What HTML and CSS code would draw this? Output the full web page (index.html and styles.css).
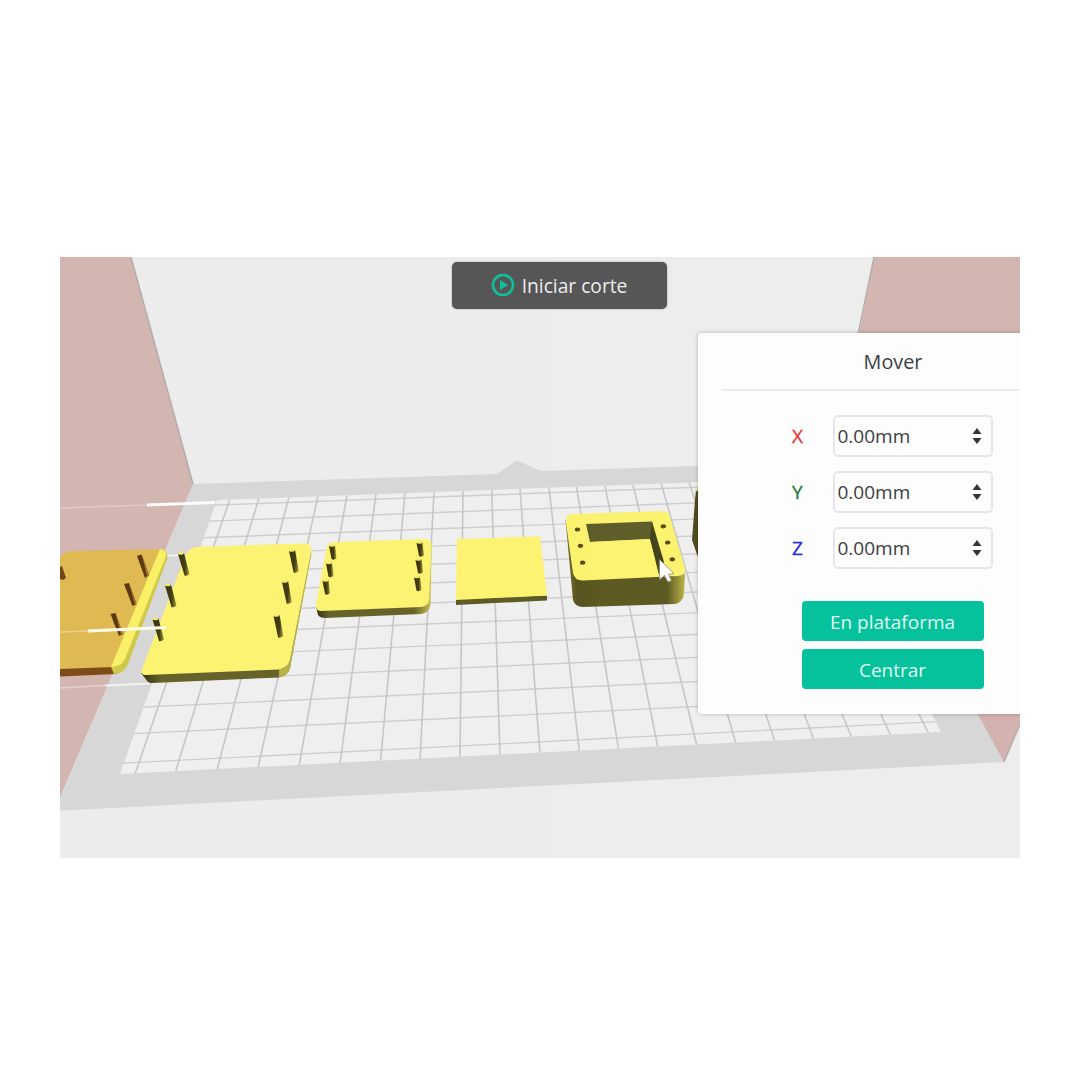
FILE: index.html
```html
<!DOCTYPE html>
<html lang="es">
<head>
<meta charset="utf-8">
<title>Mover</title>
<link rel="stylesheet" href="styles.css">
</head>
<body>
<main class="viewer">
  <svg class="scene" viewBox="60 257 960 601" aria-hidden="true">
    <defs>
      <clipPath id="grid"><path d="M217 500L811 478L941 732L120 774Z"/></clipPath>
      <linearGradient id="edge"><stop offset="0" stop-color="#34320f"/><stop offset=".12" stop-color="#66632a"/><stop offset=".85" stop-color="#66632a"/><stop offset="1" stop-color="#cbc451"/></linearGradient>
      <linearGradient id="boxside"><stop offset="0" stop-color="#777430"/><stop offset=".1" stop-color="#56531f"/><stop offset=".28" stop-color="#5c5922"/><stop offset=".85" stop-color="#5c5922"/><stop offset="1" stop-color="#bbb64a"/></linearGradient>
      <linearGradient id="peg"><stop offset="0" stop-color="#39330c"/><stop offset=".6" stop-color="#433e14"/><stop offset="1" stop-color="#aaa23d"/></linearGradient>
      <g id="tall"><path d="M-.5 0L5.500 -1L11 20Q8.500 22.500 6 21.500Z" fill="url(#peg)"/><ellipse cx="2.300" cy="-.5" rx="3" ry="1.300" fill="#f3ea68"/></g>
      <g id="short"><path d="M-.5 0L5.500 -1L7 12.500Q4 14.500 2 13Z" fill="url(#peg)"/><ellipse cx="2.500" cy="-.5" rx="2.900" ry="1.200" fill="#f3ea68"/></g>
    </defs>

    <rect x="60" y="257" width="960" height="601" fill="#ececec"/>
    <path d="M552 257H1020V858H552Z" fill="#ededed"/>
    <path d="M193 484L497 474L517 460.500L541 471L850 461L1004 762L55 811Z" fill="#d7d7d7"/>
    <path d="M217 500L811 478L941 732L120 774Z" fill="#efefef"/>

    <g clip-path="url(#grid)" fill="none" stroke="#cecece">
      <path stroke-width="1.400" d="M100 764.300L980 719.400M100 735.200L980 692.900M100 709.100L980 668.600M100 684L980 644.800M100 660L980 622.200M100 637.800L980 600.800M100 616.500L980 580.400M100 596.200L980 561M100 577.400L980 542.600M100 559.100L980 524.800M100 541.600L980 508.200M100 525.200L980 492.200M100 509.400L980 476.800"/>
      <path stroke-width="1.600" stroke="#c6c6c6" d="M230 499L135 774M259 498L175.500 772M289 497L217 770M318 496L258 768M347 495L299 766M376 494L340 764M405 493L380.500 762M434 492L420 760M463 491L460 758M491.700 490L500 756M520 489L540 754M549 488L579.500 752M576.500 487L618.700 750M605 486L658 748M633 485L697 746M661 483L736 744M689 482L775 742M717 481L814 740M745 480L852 738M772 479L891 736M799 478L929 734"/>
    </g>

    <g class="walls">
      <path d="M60 257H131L193 484L60 798Z" fill="#d3b5b1"/>
      <path d="M874 257H1020V340H858Z" fill="#d3b5b1"/>
      <path d="M970 700H1020V724L1004 762Z" fill="#d3b2af"/>
      <path d="M131 257L193 484M874 257L857 340M1020 724L1004 762" stroke="#b5adaa" stroke-width="1.500" fill="none"/>
    </g>

    <path d="M60 508L147 505" stroke="#dfcac7" stroke-width="1.500"/>
    <path d="M147 505L215 502.500" stroke="#fcfcfc" stroke-width="3"/>
    <path d="M60 688L105 685.500" stroke="#e6d1ce" stroke-width="1.500"/>
    <path d="M105 685.500L150 683.500M166 556L180 555" stroke="#f2f2f2" stroke-width="2"/>

    <g class="board-outside">
      <path d="M60 668L113 664L117 674L60 676.500Z" fill="#7d4c18"/>
      <path d="M60 557Q65 551 73 551L164 549L113 667L60 669Z" fill="#dfba52"/>
      <path d="M160 549Q168 549.500 167.500 558L128 664Q124 674 114 674L111 667Z" fill="#d0c84a"/>
      <path d="M160 549Q167 549.500 166 556L125 659Q121 667 111 667Z" fill="#f9f067"/>
      <path d="M60 567L62 566L66 578L63 580L60 579Z" fill="#704617"/>
      <path d="M137 556L141.500 554.500L149 575L145 578Z M124 584L129 583L136.500 604L132.500 606Z M110.500 614L115.500 613L123 634L119 636Z" fill="#5c3811"/>
      <path d="M142 555L149 575L147 576.500Z M129 583L136.500 604L135 605Z M115.500 613L123 634L121 635Z" fill="#a97728"/>
    </g>

    <g class="board-large">
      <path d="M141 673L148 682Q149 683 152 683L279 677.500Q288 676 290 668L311 553L280 660Z" fill="url(#edge)"/>
      <path d="M196 547L303 543.500Q313 543 311 552L290 660Q288 668 279 669.500L146 675Q140 675 142 669L183 562Q187 548 196 547Z" fill="#fcf373"/>
      <path d="M311 552L290 660Q288 668 279 669.500V677.500Q288 676 290 668L311.500 554Z" fill="#b8b248"/>
      <use href="#tall" x="178.500" y="554"/>
      <use href="#tall" x="165.500" y="585.500"/>
      <use href="#tall" x="153" y="619.500"/>
      <use href="#tall" transform="translate(289.500 551) skewX(-5)"/>
      <use href="#tall" transform="translate(282.500 582) skewX(-5)"/>
      <use href="#tall" transform="translate(274 616) skewX(-5)"/>
    </g>
    <path d="M60 632L88 631" stroke="#edcf89" stroke-width="1.500"/>
    <path d="M88 631L166 627.500" stroke="#fffde9" stroke-width="3"/>

    <g class="board-small">
      <path d="M316 606L318 615Q320 618 325 618L421 614Q429 613 430.500 605L431.500 545Z" fill="url(#edge)"/>
      <path d="M334 542L425 539Q432 539 431.500 546L429 600Q428 606 421 607L321 611Q315 611 316 604L326 550Q328 542 334 542Z" fill="#fcf373"/>
      <use href="#short" x="329.500" y="546"/><use href="#short" x="326.500" y="563.500"/><use href="#short" x="323" y="581"/>
      <use href="#short" x="417" y="543"/><use href="#short" x="416" y="560"/><use href="#short" x="414.500" y="577.500"/>
    </g>

    <g class="plate">
      <path d="M456 599L547 595.500V600.500L456 605Z" fill="#5f5b26"/>
      <path d="M457 539L540 536.500L547 595.500L456 600Z" fill="#fcf373"/>
    </g>

    <g class="box">
      <path d="M565.500 520L573 600Q575 607 583 607L675 604Q683 602 684 594L685 574L650 560Z" fill="url(#boxside)"/>
      <path d="M573 514L663 511Q668 511 670 517L685 568Q686 575 678 576L583 580.500Q575 581 573 573L566 523Q565 514 573 514Z" fill="#fbf270"/>
      <path d="M586 524L652 521.500L665 576L658 573L650 539L590 542Z" fill="#5f5d29"/>
      <path d="M590 542L650 539L659 576L590 578Z" fill="#fcf373"/>
      <path d="M652 521.500L672 572L661 576L665 560Z" fill="#fbf270"/>
      <path d="M650 539L652 521.500L664 562L659 571Z" fill="#45431a"/>
      <g fill="#5b4b16"><ellipse cx="577.500" cy="529.500" rx="2.700" ry="2.100"/><ellipse cx="580.500" cy="545.800" rx="2.700" ry="2.100"/><ellipse cx="582.700" cy="562.700" rx="2.700" ry="2.100"/><ellipse cx="663.300" cy="526.300" rx="2.700" ry="2.100"/><ellipse cx="667.700" cy="542.500" rx="2.700" ry="2.100"/><ellipse cx="672.300" cy="559.300" rx="2.700" ry="2.100"/></g>
    </g>
    <path d="M699 488L696 490L695 500L692 540L699 560Z" fill="#4f4d1d"/>
    <path d="M699 487L695.500 490L697 492Z" fill="#f1ea6a"/>
    <path d="M659.500 559.500V579.500L664.500 575.500L668 582L671.500 580.500L668.500 574.500L674 573.500Z" fill="#fff" stroke="#8a8878" stroke-width=".8" stroke-linejoin="round"/>
  </svg>

  <button class="slice">
    <svg class="play" viewBox="0 0 24 24"><circle cx="12" cy="12" r="10"/><path d="M9 7V17L17 12Z"/></svg>
    <span>Iniciar corte</span>
  </button>

  <section class="panel">
    <h1 class="title">Mover</h1>
    <div class="axes">
      <div class="axis"><span class="name red">X</span><div class="field"><span>0.00mm</span><svg class="spin" viewBox="0 0 10 18"><path d="M5 1L9.500 7H.5ZM5 17L.5 11H9.500Z"/></svg></div></div>
      <div class="axis"><span class="name green">Y</span><div class="field"><span>0.00mm</span><svg class="spin" viewBox="0 0 10 18"><path d="M5 1L9.500 7H.5ZM5 17L.5 11H9.500Z"/></svg></div></div>
      <div class="axis"><span class="name blue">Z</span><div class="field"><span>0.00mm</span><svg class="spin" viewBox="0 0 10 18"><path d="M5 1L9.500 7H.5ZM5 17L.5 11H9.500Z"/></svg></div></div>
    </div>
    <div class="actions">
      <button class="action">En plataforma</button>
      <button class="action">Centrar</button>
    </div>
  </section>
</main>
</body>
</html>
```
FILE: styles.css
```css
* { box-sizing: border-box; }
body {
  margin: 0;
  height: 1080px;
  padding: 257px 60px 0;
  background: #fff;
  font-family: "Open Sans", "Noto Sans", sans-serif;
  overflow: hidden;
}
.viewer {
  position: relative;
  width: 960px;
  height: 601px;
  overflow: hidden;
}
.scene { display: block; width: 960px; height: 601px; }
button { font-family: inherit; border: 0; margin: 0; }
.slice {
  position: absolute;
  left: 391.5px;
  top: 4.5px;
  width: 215.5px;
  height: 47px;
  display: flex;
  align-items: center;
  justify-content: center;
  gap: 6.5px;
  padding: 0;
  border-radius: 5px;
  background: #565656;
  box-shadow: 0 0 2px #999;
  color: #ededed;
  font-size: 19.2px;
  white-space: nowrap;
}
.play { width: 24px; height: 24px; fill: #0bc39a; }
.play circle { fill: none; stroke: #0bc39a; stroke-width: 2.6; }
.panel {
  position: absolute;
  left: 637.5px;
  top: 76px;
  width: 391px;
  height: 381px;
  padding: 0 24px;
  border-radius: 4px;
  background: #fdfdfd;
  box-shadow: 0 0 4px rgba(0, 0, 0, .25);
  color: #3a3e43;
}
.title {
  margin: 0;
  height: 57.5px;
  border-bottom: 2px solid #ececee;
  text-align: center;
  font-size: 19.8px;
  font-weight: 400;
  line-height: 57px;
}
.axes {
  display: flex;
  flex-direction: column;
  gap: 14.2px;
  padding: 24px 0 0 70.5px;
}
.axis { display: flex; align-items: center; height: 42.2px; }
.name { width: 41px; font-size: 19px; -webkit-text-stroke: .3px; }
.red { color: #e2362f; }
.green { color: #1c7a34; }
.blue { color: #2a2fd8; }
.field {
  display: flex;
  align-items: center;
  justify-content: space-between;
  width: 160px;
  height: 42px;
  padding: 0 9px 0 2.5px;
  border: 2px solid #e6e6ea;
  border-radius: 5px;
  font-size: 19px;
}
.spin { width: 10px; height: 18px; fill: #333; }
.actions {
  display: flex;
  flex-direction: column;
  gap: 8.5px;
  width: 182px;
  margin: 32px 0 0 80px;
}
.action {
  height: 39.5px;
  padding: 1.5px 0 0;
  border-radius: 4px;
  background: #05c19c;
  color: #e0faf3;
  font-size: 19px;
}
```
